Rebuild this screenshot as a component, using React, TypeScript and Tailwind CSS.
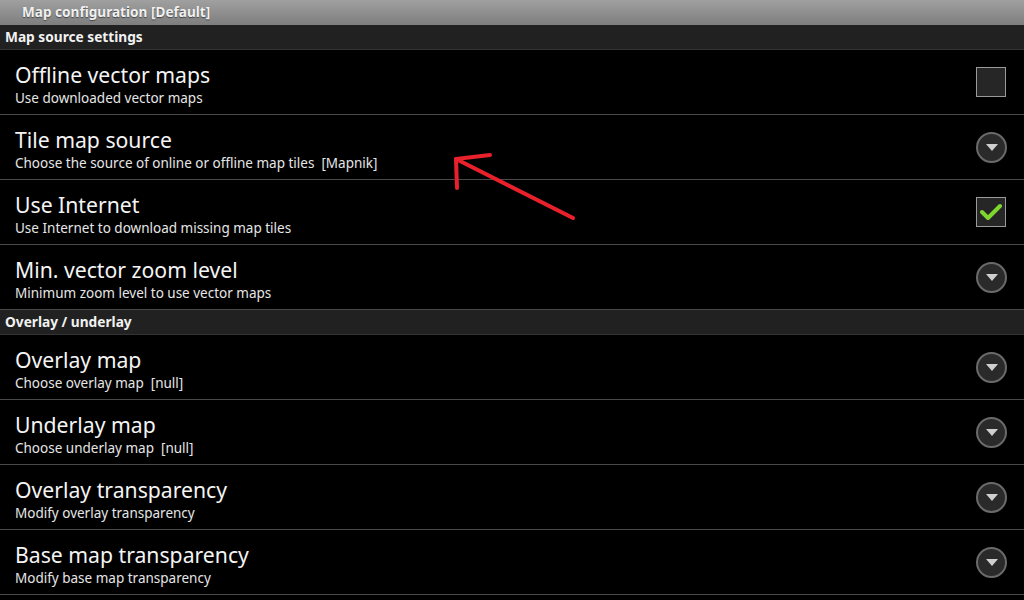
import { ReactNode } from 'react'

type Item = {
  title: string
  summary: string
  kind: 'check' | 'list'
  checked?: boolean
}

const mapSource: Item[] = [
  { title: 'Offline vector maps', summary: 'Use downloaded vector maps', kind: 'check', checked: false },
  { title: 'Tile map source', summary: 'Choose the source of online or offline map tiles  [Mapnik]', kind: 'list' },
  { title: 'Use Internet', summary: 'Use Internet to download missing map tiles', kind: 'check', checked: true },
  { title: 'Min. vector zoom level', summary: 'Minimum zoom level to use vector maps', kind: 'list' },
]

const overlay: Item[] = [
  { title: 'Overlay map', summary: 'Choose overlay map  [null]', kind: 'list' },
  { title: 'Underlay map', summary: 'Choose underlay map  [null]', kind: 'list' },
  { title: 'Overlay transparency', summary: 'Modify overlay transparency', kind: 'list' },
  { title: 'Base map transparency', summary: 'Modify base map transparency', kind: 'list' },
]

export default function App() {
  return (
    <div
      className="relative w-[1024px] h-[600px] overflow-hidden bg-black text-white"
      style={{ fontFamily: '"Noto Sans", "Open Sans", sans-serif' }}
    >
      {/* Title bar */}
      <div className="h-[25px] bg-gradient-to-b from-[#a0a0a0] to-[#7e7e7e] flex items-center pl-[22px]">
        <span className="text-[13.6px] font-bold text-[#f0f0f0] [text-shadow:0_1px_1px_#444]">
          Map configuration [Default]
        </span>
      </div>

      <SectionHeader>Map source settings</SectionHeader>
      {mapSource.map((item) => (
        <Row key={item.title} item={item} />
      ))}

      <SectionHeader>Overlay / underlay</SectionHeader>
      {overlay.map((item) => (
        <Row key={item.title} item={item} />
      ))}

      {/* Red arrow annotation */}
      <svg className="absolute left-0 top-0 pointer-events-none" width="1024" height="600">
        <g stroke="#e8212b" strokeWidth="4" strokeLinecap="round" fill="none">
          <line x1="573" y1="218" x2="458" y2="160" />
          <line x1="456" y1="159" x2="490" y2="155" />
          <line x1="456" y1="159" x2="457" y2="188" />
        </g>
      </svg>
    </div>
  )
}

function SectionHeader({ children }: { children: ReactNode }) {
  return (
    <div className="h-[25px] bg-[#212121] border-b border-[#333] flex items-center pl-[5px]">
      <span className="text-[13.7px] font-bold text-[#f2f2f2]">{children}</span>
    </div>
  )
}

function Row({ item }: { item: Item }) {
  return (
    <div className="h-[65px] flex items-center pl-[15px] pr-[17px] border-b border-[#4a4a4a]">
      <div className="flex-1 flex flex-col pt-[5px]">
        <span className="text-[21.2px] leading-[25px] text-[#f4f4f4]">{item.title}</span>
        <span className="text-[13.5px] leading-[20px] mt-[1px] text-[#e6e6e6] whitespace-pre">
          {item.summary}
        </span>
      </div>
      {item.kind === 'check' ? <CheckBox checked={!!item.checked} /> : <DropButton />}
    </div>
  )
}

function CheckBox({ checked }: { checked: boolean }) {
  return (
    <div className="w-[30px] h-[30px] mr-[1px] border border-[#9a9a9a] bg-[#262626] flex items-center justify-center">
      {checked && (
        <svg width="22" height="18" viewBox="0 0 22 18">
          <path d="M2 9 L8 15 L20 3" stroke="#7fd62f" strokeWidth="4" fill="none" strokeLinecap="round" strokeLinejoin="round" />
        </svg>
      )}
    </div>
  )
}

function DropButton() {
  return (
    <div className="w-[31px] h-[31px] rounded-full border-2 border-[#6a6a6a] bg-[#2a2a2a] flex items-center justify-center">
      <svg width="12" height="7" viewBox="0 0 12 7">
        <path d="M0 0 L12 0 L6 7 Z" fill="#cfcfcf" />
      </svg>
    </div>
  )
}
